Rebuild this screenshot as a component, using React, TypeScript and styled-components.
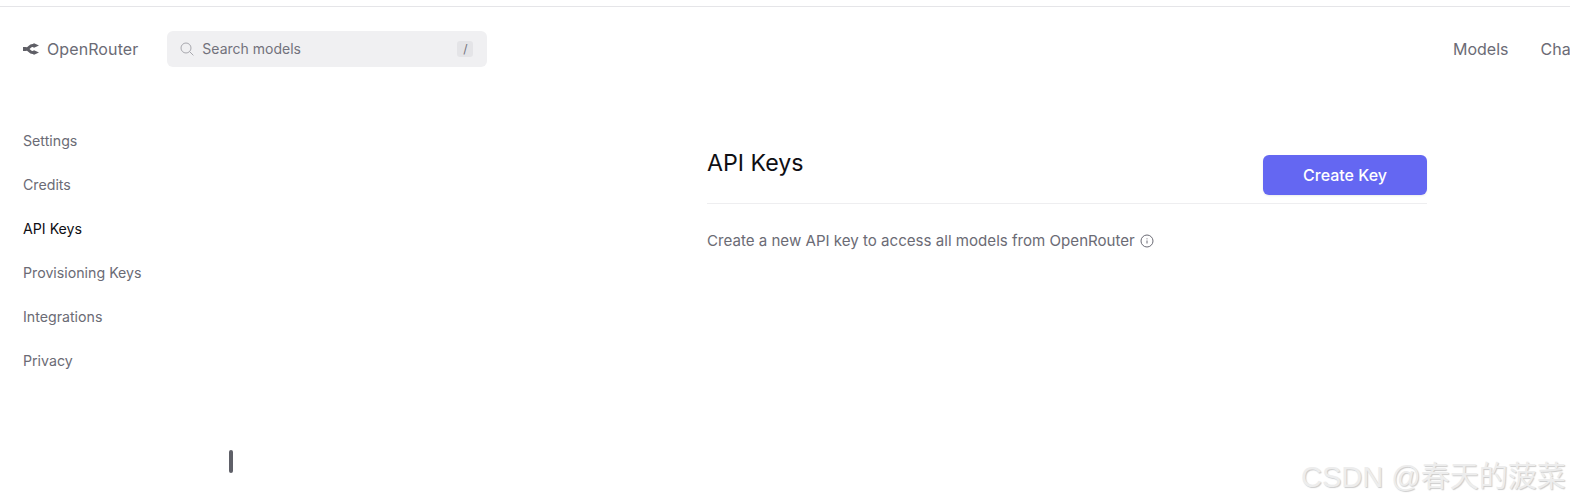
import styled, { createGlobalStyle } from "styled-components";

const sideItems = ["Settings", "Credits", "API Keys", "Provisioning Keys", "Integrations", "Privacy"];

function App() {
  return (
    <>
      <GlobalStyle />
      <Page>
        <Header>
          <LeftGroup>
            <Logo>
              <svg width="16" height="12" viewBox="0 0 16 12" fill="none">
                <path d="M0 6.4h2.5c3.5 0 4-4 7-4H12" stroke="#5f5f66" strokeWidth="3" />
                <path d="M0 5.6h2.5c3.5 0 4 4 7 4H12" stroke="#5f5f66" strokeWidth="3" />
                <path d="M10.5 0l5.5 2.5-5.5 2.5zM10.5 7l5.5 2.5-5.5 2.5z" fill="#5f5f66" />
              </svg>
              <span>OpenRouter</span>
            </Logo>
            <SearchBox>
              <svg width="14" height="14" viewBox="0 0 14 14" fill="none" stroke="#a8a8ae" strokeWidth="1">
                <circle cx="6" cy="6" r="5" />
                <path d="M9.6 9.6L13.4 13.4" />
              </svg>
              <SearchText>Search models</SearchText>
              <SlashKey>/</SlashKey>
            </SearchBox>
          </LeftGroup>
          <Nav>
            <NavLink>Models</NavLink>
            <NavLink>Cha</NavLink>
          </Nav>
        </Header>
        <Body>
          <Sidebar>
            {sideItems.map((item) => (
              <SideItem key={item} $active={item === "API Keys"}>
                {item}
              </SideItem>
            ))}
          </Sidebar>
          <Main>
            <TitleRow>
              <Title>API Keys</Title>
              <CreateButton>Create Key</CreateButton>
            </TitleRow>
            <Description>
              Create a new API key to access all models from OpenRouter
              <svg width="14" height="14" viewBox="0 0 14 14" fill="none" stroke="#6b6b75" strokeWidth="1">
                <circle cx="7" cy="7" r="6" />
                <path d="M7 6.5v3M7 4.4v.9" />
              </svg>
            </Description>
          </Main>
        </Body>
        <DragHandle />
        <Watermark>CSDN @春天的菠菜</Watermark>
      </Page>
    </>
  );
}

const GlobalStyle = createGlobalStyle`
  html, body {
    margin: 0;
    padding: 0;
    background: #fff;
  }
  body {
    font-family: Inter, "Liberation Sans", sans-serif;
  }
`;

const Page = styled.div`
  position: relative;
  width: 1570px;
  height: 504px;
  overflow: hidden;
  background: #fff;
  box-sizing: border-box;
  padding-top: 6px;
`;

const Header = styled.header`
  display: flex;
  align-items: center;
  height: 83px;
  padding: 0 0 0 23px;
  border-top: 1px solid #e5e5e8;
  white-space: nowrap;
`;

const LeftGroup = styled.div`
  display: flex;
  align-items: center;
  flex: none;
  width: 1430px;
  gap: 29px;
`;

const Logo = styled.div`
  display: flex;
  align-items: center;
  gap: 8px;
  font-size: 16px;
  letter-spacing: 0.1px;
  color: #6b6b75;

  span {
    padding-top: 1px;
  }
`;

const SearchBox = styled.div`
  display: flex;
  align-items: center;
  width: 320px;
  height: 36px;
  box-sizing: border-box;
  padding: 0 14px 0 13px;
  gap: 8px;
  background: #f0f0f2;
  border-radius: 6px;
`;

const SearchText = styled.span`
  flex: 1;
  font-size: 14px;
  color: #72727c;
`;

const SlashKey = styled.span`
  width: 16px;
  height: 16px;
  line-height: 16px;
  text-align: center;
  font-size: 12px;
  color: #72727c;
  background: #e4e4e7;
  border-radius: 3px;
`;

const Nav = styled.nav`
  display: flex;
  gap: 32px;
`;

const NavLink = styled.a`
  padding-top: 1px;
  font-size: 16px;
  color: #6b6b75;
`;

const Body = styled.div`
  display: flex;
`;

const Sidebar = styled.aside`
  flex: none;
  width: 707px;
  box-sizing: border-box;
  padding: 40px 0 0 23px;
  display: flex;
  flex-direction: column;
  gap: 22px;
`;

const SideItem = styled.div<{ $active?: boolean }>`
  font-size: 14.2px;
  line-height: 22px;
  color: ${(p) => (p.$active ? "#0f0f14" : "#6b6b75")};
`;

const Main = styled.main`
  width: 720px;
  padding-top: 55px;
`;

const TitleRow = styled.div`
  display: flex;
  justify-content: space-between;
  align-items: flex-start;
  height: 59px;
  box-sizing: border-box;
  padding-top: 10px;
  border-bottom: 1px solid #eeeef0;
`;

const Title = styled.h1`
  margin: -8px 0 0;
  font-size: 23.2px;
  line-height: 32px;
  font-weight: 400;
  color: #0f0f14;
`;

const CreateButton = styled.button`
  width: 164px;
  height: 40px;
  border: none;
  border-radius: 6px;
  background: #6467f2;
  color: #fff;
  font-family: inherit;
  font-size: 16px;
  font-weight: 500;
  box-shadow: 0 1px 2px rgba(0, 0, 0, 0.08);
`;

const Description = styled.p`
  display: flex;
  align-items: center;
  gap: 5px;
  margin: 25px 0 0;
  font-size: 15.1px;
  line-height: 24px;
  color: #6b6b75;
`;

const DragHandle = styled.div`
  position: absolute;
  left: 229px;
  top: 450px;
  width: 4px;
  height: 23px;
  border-radius: 2px;
  background: #5f6068;
`;

const Watermark = styled.div`
  position: absolute;
  left: 1301px;
  top: 460px;
  font-family: "Liberation Sans", "Noto Sans CJK SC", sans-serif;
  font-size: 29px;
  line-height: 34px;
  white-space: nowrap;
  color: #ededed;
  text-shadow: 1px 1px 1px #cccccc;
`;

export default App;
